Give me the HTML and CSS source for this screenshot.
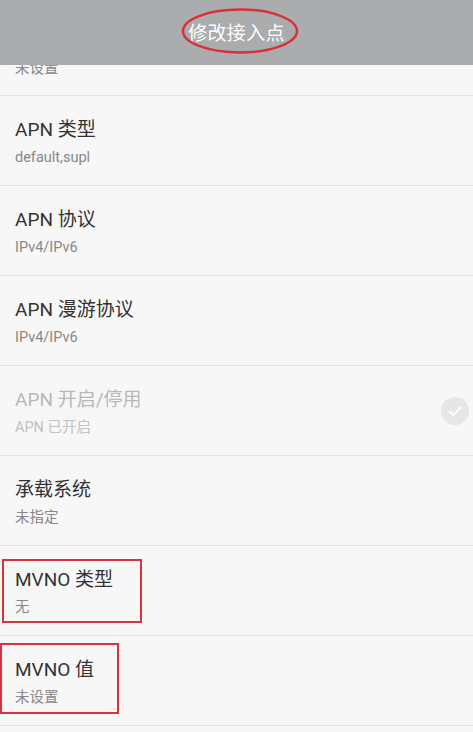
FILE: index.html
```html
<!DOCTYPE html>
<html lang="zh-CN">
<head>
  <meta charset="UTF-8" />
  <meta name="viewport" content="width=device-width, initial-scale=1.0"/>
  <title>修改接入点</title>
  <link rel="stylesheet" href="styles.css">
</head>
<body>

  <div class="header">
    <h1>修改接入点</h1>
    <svg class="mark-ellipse" width="120" height="48" viewBox="0 0 120 48">
      <ellipse cx="60" cy="24" rx="57" ry="21.5" fill="none" stroke="#d8313a" stroke-width="2.5"/>
    </svg>
  </div>

  <div class="list">
    <div class="row-clip">
      <div class="row">
        <div class="row-text">
          <h3>APN 服务器</h3>
          <p>未设置</p>
        </div>
      </div>
    </div>

    <div class="row">
      <div class="row-text">
        <h3>APN 类型</h3>
        <p>default,supl</p>
      </div>
    </div>

    <div class="row">
      <div class="row-text">
        <h3>APN 协议</h3>
        <p>IPv4/IPv6</p>
      </div>
    </div>

    <div class="row">
      <div class="row-text">
        <h3>APN 漫游协议</h3>
        <p>IPv4/IPv6</p>
      </div>
    </div>

    <div class="row disabled">
      <div class="row-text">
        <h3>APN 开启/停用</h3>
        <p>APN 已开启</p>
      </div>
      <span class="check">
        <svg width="28" height="28" viewBox="0 0 28 28">
          <path d="M8.5 14.5 L12.5 18.2 L19.5 10.5" fill="none" stroke="#fff" stroke-width="2" stroke-linecap="round" stroke-linejoin="round"/>
        </svg>
      </span>
    </div>

    <div class="row">
      <div class="row-text">
        <h3>承载系统</h3>
        <p>未指定</p>
      </div>
    </div>

    <div class="row">
      <div class="row-text">
        <h3>MVNO 类型</h3>
        <p>无</p>
      </div>
      <span class="mark-box box-type"></span>
    </div>

    <div class="row">
      <div class="row-text">
        <h3>MVNO 值</h3>
        <p>未设置</p>
      </div>
      <span class="mark-box box-value"></span>
    </div>
  </div>

</body>
</html>
```

FILE: styles.css
```css
* {
  margin: 0;
  padding: 0;
  box-sizing: border-box;
  font-family: Roboto, "Noto Sans CJK SC", sans-serif;
}

html, body {
  height: 100%;
  background: #f7f7f7;
  overflow: hidden;
}

.header {
  position: relative;
  height: 65px;
  background: #aaacae;
  display: flex;
  align-items: center;
  justify-content: center;
}

.header h1 {
  font-size: 19px;
  font-weight: normal;
  color: #ffffff;
  margin-top: -3px;
  letter-spacing: 0.3px;
}

.mark-ellipse {
  position: absolute;
  left: 180px;
  top: 7px;
}

.list {
  background: #f7f7f7;
}

/* first row is scrolled under the header */
.row-clip {
  height: 31px;
  overflow: hidden;
  border-bottom: 1px solid #e3e3e3;
}

.row-clip .row {
  margin-top: -59px;
  border-bottom: none;
}

.row {
  position: relative;
  display: flex;
  align-items: center;
  height: 90px;
  padding: 0 4px 0 15px;
  border-bottom: 1px solid #e3e3e3;
}

.row-text {
  flex-grow: 1;
  padding-top: 5px;
}

.row h3 {
  font-size: 19px;
  font-weight: normal;
  line-height: 24px;
  color: #333333;
}

.row p {
  font-size: 14.5px;
  line-height: 20px;
  margin-top: 6px;
  color: #888888;
}

.row.disabled h3 {
  color: #b8b8b8;
}

.row.disabled p {
  color: #c2c2c2;
}

.check {
  width: 28px;
  height: 28px;
  border-radius: 50%;
  background: #e6e6e6;
  display: flex;
}

.mark-box {
  position: absolute;
  border: 2px solid #d8333b;
}

.box-type {
  left: 2px;
  top: 13px;
  width: 140px;
  height: 64px;
}

.box-value {
  left: 0;
  top: 7px;
  width: 119px;
  height: 71px;
}
```
